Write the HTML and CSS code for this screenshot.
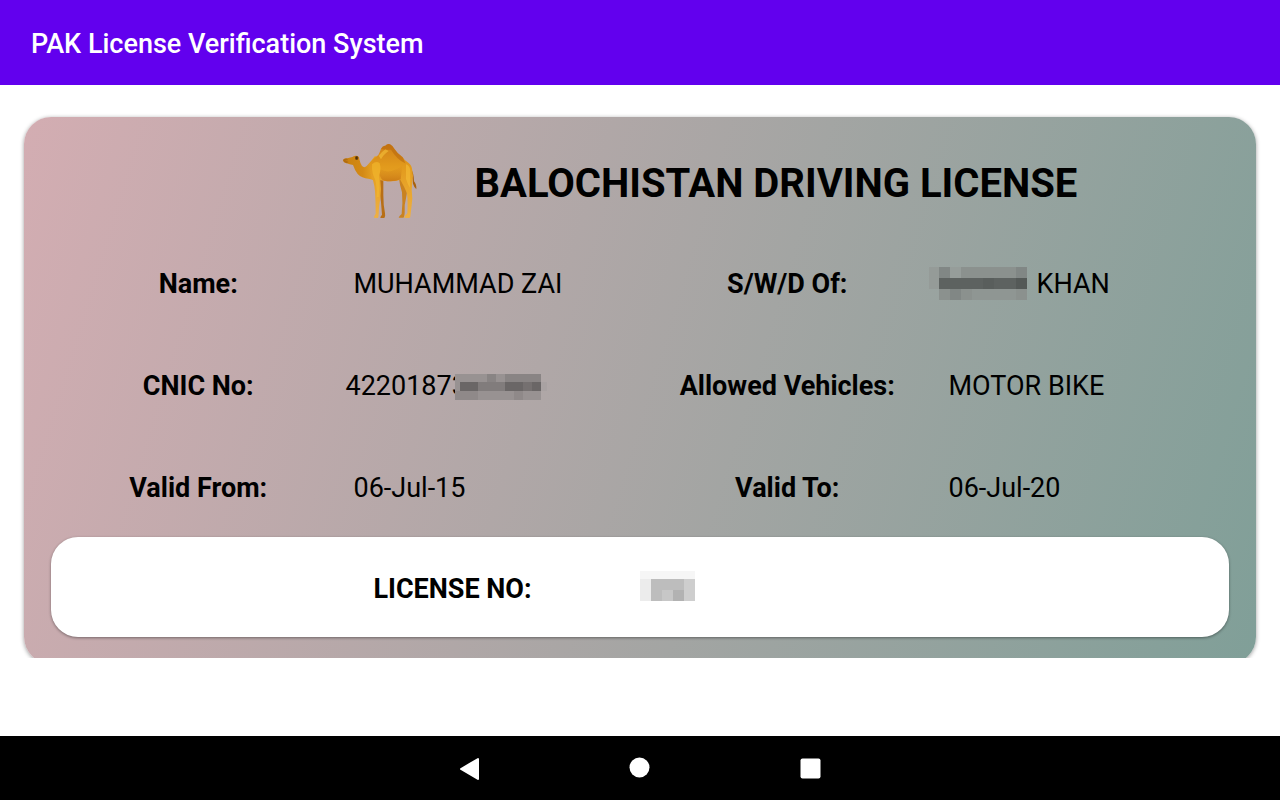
FILE: index.html
```html
<!DOCTYPE html>
<html lang="en">

<head>
    <meta charset="UTF-8">
    <meta name="viewport" content="width=device-width, initial-scale=1.0">
    <title>PAK License Verification System</title>
    <link rel="stylesheet" href="styles.css">
</head>

<body>
    <header class="app-bar">
        <h1>PAK License Verification System</h1>
    </header>

    <main class="content">
        <div class="card-area">
            <section class="card">
                <div class="card-header">
                    <svg class="camel" viewBox="39 39 228 228" role="img" aria-label="Camel">
                        <defs>
                            <linearGradient id="body" x1="0" y1="0" x2="0" y2="1">
                                <stop offset="0" stop-color="#d08018" />
                                <stop offset="0.3" stop-color="#e29a1c" />
                                <stop offset="0.6" stop-color="#e8a52c" />
                                <stop offset="1" stop-color="#eeb044" />
                            </linearGradient>
                            <linearGradient id="neck" x1="0" y1="0" x2="1" y2="0">
                                <stop offset="0" stop-color="#c8800f" />
                                <stop offset="0.5" stop-color="#d48a16" />
                                <stop offset="1" stop-color="#f2b52e" />
                            </linearGradient>
                            <linearGradient id="belly" x1="0" y1="0" x2="0" y2="1">
                                <stop offset="0" stop-color="#d68a1a" stop-opacity="0" />
                                <stop offset="1" stop-color="#cc7c16" />
                            </linearGradient>
                        </defs>
                        <path fill="#b86f16" d="M147 150 L160 151 Q160 176 160 196 Q160 226 165 250 Q167 261 163 264 L151 264 Q151 259 156 254 Q154 214 148 183 Z" />
                        <path fill="#c98220" d="M207 145 L228 150 Q234 180 228 205 Q222 226 224 248 Q223 261 220 263 L206 263 Q207 258 215 252 Q219 220 216 187 Q209 166 207 145 Z" />
                        <path fill="#a9610c" d="M242 115 Q252 130 252 154 Q260 163 259 178 Q252 171 249 161 Q248 138 239 124 Z" />
                        <path fill="url(#neck)" d="M39 90 Q42 84 52 85 L67 81 Q74 76 83 78 Q89 80 88 88 Q90 98 96 108 Q103 115 110 108 Q124 93 135 78 L158 90 L150 145 L133 152 Q125 147 115 146 Q96 145 83 132 Q74 120 69 105 Q59 103 50 100 Q40 98 39 90 Z" />
                        <path fill="url(#body)" d="M120 98 Q134 82 145 75 Q149 68 153 56 Q159 46 166 47 Q172 40 180 43 Q187 46 194 58 Q202 71 218 82 Q224 93 235 98 Q246 106 247 122 Q251 137 247 155 Q243 181 247 205 Q245 230 242 251 Q242 261 238 264 L223 264 Q224 257 232 250 Q234 215 231 190 Q224 172 211 149 Q190 157 162 152 L151 150 Q155 178 151 205 Q146 230 146 252 Q146 262 143 264 L132 263 Q132 258 137 251 Q137 214 135 184 Q134 169 129 151 Q119 130 120 98 Z" />
                        <path fill="url(#belly)" d="M151 118 Q181 135 217 106 L212 148 Q190 157 162 152 Q154 150 149 135 Z" />
                        <path fill="#b7660d" d="M153 56 Q159 46 166 47 Q172 40 180 43 Q187 46 194 58 Q202 71 218 82 L226 100 Q202 90 183 59 Q171 61 153 56 Z" opacity="0.55" />
                        <path fill="#f4bb2f" d="M126 103 Q139 90 149 100 Q155 118 147 136 Q151 170 146 201 L140 202 Q142 172 135 148 Q125 130 126 103 Z" opacity="0.6" />
                        <path fill="#f5c23a" d="M146 77 Q155 66 166 58 L176 63 Q159 75 153 88 Z" opacity="0.6" />
                        <path fill="#f5bb36" d="M228 103 Q241 107 241 126 L240 174 Q233 163 228 147 Z" opacity="0.65" />
                        <path fill="#a9650f" d="M39 90 Q42 84 52 86 L54 91 L45 91 L56 96 L50 100 Q41 97 39 90 Z" opacity="0.75" />
                        <ellipse cx="80" cy="84" rx="5" ry="6" fill="#6b430c" />
                        <circle cx="80" cy="84" r="2" fill="#3a2407" />
                    </svg>
                    <h2>BALOCHISTAN DRIVING LICENSE</h2>
                </div>

                <dl class="fields">
                    <dt>Name:</dt>
                    <dd>MUHAMMAD ZAI</dd>
                    <dt>S/W/D Of:</dt>
                    <dd class="father">
                        <svg class="mask" width="100" height="33" role="img" aria-label="Hidden">
                            <g shape-rendering="crispEdges">
                                <path fill="#959b98" d="M0 0h10v22h-10z" />
                                <path fill="#8b918e" d="M10 0h88v33h-88z" />
                                <path fill="#818785" d="M10 0h11v11h-11zM87 0h11v11h-11zM21 22h11v11h-11z" />
                                <path fill="#969d9a" d="M21 0h11v11h-11z" />
                                <path fill="#8f9693" d="M43 22h44v11h-44z" />
                                <path fill="#5d6260" d="M10 11h77v11h-77z" />
                                <path fill="#595e5c" d="M54 11h11v11h-11z" />
                                <path fill="#545957" d="M87 11h11v11h-11z" />
                            </g>
                        </svg>
                        KHAN
                    </dd>

                    <dt>CNIC No:</dt>
                    <dd class="cnic">
                        42201873
                        <svg class="mask" width="92" height="26" role="img" aria-label="Hidden">
                            <g shape-rendering="crispEdges">
                                <path fill="#989292" d="M0 0h86v26h-86z" />
                                <path fill="#898484" d="M32 0h9v17h-9zM50 0h36v8h-36z" />
                                <path fill="#8f8989" d="M0 17h23v9h-23zM59 17h9v9h-9z" />
                                <path fill="#817c7c" d="M23 8h27v9h-27z" />
                                <path fill="#6a6666" d="M5 8h18v9h-18zM50 8h18v9h-18zM77 8h9v9h-9z" />
                                <path fill="#757070" d="M68 8h9v9h-9z" />
                                <path fill="#a9a2a2" d="M86 8h6v9h-6z" />
                            </g>
                        </svg>
                    </dd>
                    <dt>Allowed Vehicles:</dt>
                    <dd>MOTOR BIKE</dd>

                    <dt>Valid From:</dt>
                    <dd>06-Jul-15</dd>
                    <dt>Valid To:</dt>
                    <dd>06-Jul-20</dd>
                </dl>

                <dl class="license">
                    <dt>LICENSE NO:</dt>
                    <dd>
                        <svg class="mask" width="56" height="30" role="img" aria-label="Hidden">
                            <g shape-rendering="crispEdges">
                                <path fill="#f6f6f6" d="M0 0h55v8h-55z" />
                                <path fill="#ececec" d="M0 8h11v22h-11z" />
                                <path fill="#bdbdbd" d="M11 8h33v22h-33z" />
                                <path fill="#c7c7c7" d="M22 19h11v11h-11z" />
                                <path fill="#b2b2b2" d="M33 19h11v11h-11z" />
                                <path fill="#cecece" d="M44 8h11v22h-11z" />
                            </g>
                        </svg>
                    </dd>
                </dl>
            </section>
        </div>
    </main>

    <nav class="nav-bar">
        <button type="button" aria-label="Back">
            <svg width="24" height="24" viewBox="0 0 24 24"><path d="M4 13 L21 3 V23 Z" fill="#fff" stroke="#fff" stroke-width="2" stroke-linejoin="round" /></svg>
        </button>
        <button type="button" aria-label="Home">
            <svg width="24" height="24" viewBox="0 0 24 24"><circle cx="11.5" cy="11.5" r="10" fill="#fff" /></svg>
        </button>
        <button type="button" aria-label="Recent apps">
            <svg width="24" height="24" viewBox="0 0 24 24"><rect x="1.5" y="2.5" width="20" height="20" rx="2" fill="#fff" /></svg>
        </button>
    </nav>
</body>

</html>
```
FILE: styles.css
```css
* {
    box-sizing: border-box;
}

body {
    margin: 0;
    min-height: 100vh;
    display: flex;
    flex-direction: column;
    background-color: #fff;
    color: #000;
    font-family: Roboto, "Liberation Sans", sans-serif;
    font-size: 27px;
    line-height: 32px;
}

h1,
h2,
dl,
dd {
    margin: 0;
}

/* top bar */
.app-bar {
    padding: 28px 31px 25px;
    background-color: #6200ee;
    color: #fff;
}

.app-bar h1 {
    font-size: 27px;
    font-weight: 500;
}

.content {
    flex: 1;
}

/* the bottom edge of the card is cut off here */
.card-area {
    padding: 32px 24px 0;
    overflow: hidden;
}

.card {
    margin-bottom: -6px;
    padding: 0 27px 27px;
    border-radius: 27px;
    background: linear-gradient(107deg, #d3adb2, #809f98);
    box-shadow: 0 1px 4px rgba(0, 0, 0, 0.4);
}

.card-header {
    display: flex;
    align-items: center;
    gap: 56px;
    height: 114px;
    padding: 14px 0 0 calc(25% - 3px);
}

.card-header h2 {
    padding-top: 6px;
    font-size: 40px;
    line-height: 48px;
    font-weight: 700;
    white-space: nowrap;
}

.camel {
    width: 76px;
    height: 76px;
    flex: none;
}

/* label / value pairs */
.fields {
    display: grid;
    grid-template-columns: repeat(4, 1fr);
    grid-auto-rows: 102px;
    align-items: center;
}

dt {
    padding-top: 3px;
    font-weight: 700;
    text-align: center;
}

.fields dd {
    display: flex;
    align-items: center;
    padding-top: 3px;
    padding-left: 8px;
    white-space: nowrap;
}

.fields dd:nth-of-type(even) {
    padding-left: 14px;
}

.fields .father {
    gap: 8px;
    margin-left: -20px;
}

.fields .cnic {
    padding-left: 0;
}

.mask {
    display: block;
    flex: none;
}

.cnic .mask {
    margin-top: 2px;
    margin-left: -12px;
}

.license {
    display: grid;
    grid-template-columns: 1fr 1fr;
    align-items: center;
    height: 100px;
    border-radius: 27px;
    background-color: #fff;
    box-shadow: 0 1px 3px rgba(0, 0, 0, 0.4);
}

.license dt {
    padding-left: 214px;
}

.license dd {
    padding-bottom: 3px;
}

/* system buttons */
.nav-bar {
    display: flex;
    justify-content: center;
    align-items: center;
    gap: 147px;
    height: 64px;
    background-color: #000;
}

.nav-bar button {
    padding: 0;
    border: none;
    background: none;
    line-height: 0;
}
```
